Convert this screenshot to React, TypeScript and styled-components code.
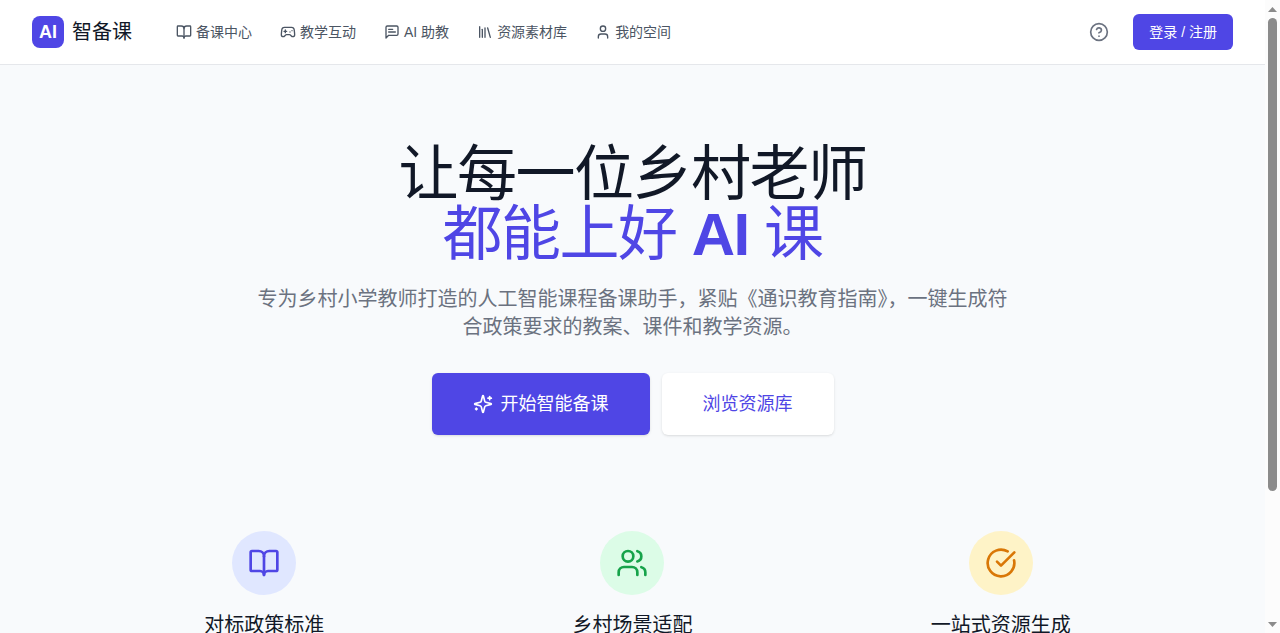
import React, { useCallback, useEffect, useRef, useState } from "react";
import styled, { createGlobalStyle } from "styled-components";
import {
  BookOpen,
  CircleCheckBig,
  CircleQuestionMark,
  Gamepad2,
  Library,
  User,
  Users,
} from "lucide-react";

const GlobalStyle = createGlobalStyle`
  *, *::before, *::after { box-sizing: border-box; }
  body {
    margin: 0;
    background: #f9fafb;
    color: #111827;
    font-family: "Liberation Sans", "Noto Sans CJK SC", sans-serif;
    font-size: 16px;
    line-height: 24px;
  }
  h1, h3, p { margin: 0; }
  a { color: inherit; text-decoration: none; }
`;

const Shell = styled.div`
  display: flex;
  height: 100vh;
`;

const Page = styled.div`
  flex: 1;
  min-width: 0;
  overflow-y: auto;
  scrollbar-width: none;
  background: #f8fafc;
`;

const ScrollRail = styled.div`
  display: flex;
  flex-direction: column;
  width: 15px;
  background: #fcfcfc;
`;

const RailButton = styled.button`
  display: flex;
  align-items: center;
  justify-content: center;
  height: 18px;
  padding: 0;
  border: 0;
  background: none;
  color: #8b8b8b;
`;

const RailTrack = styled.div`
  flex: 1;
  padding: 0 3px;
`;

const RailThumb = styled.div`
  border-radius: 5px;
  background: #8b8b8b;
`;

const Header = styled.header`
  background: #ffffff;
  border-bottom: 1px solid #e5e7eb;
`;

const HeaderInner = styled.div`
  display: flex;
  align-items: center;
  max-width: 1280px;
  height: 64px;
  margin: 0 auto;
  padding: 0 32px;
`;

const Brand = styled.a`
  display: flex;
  align-items: center;
  gap: 8px;
  font-size: 20px;
  line-height: 28px;
`;

const Logo = styled.span`
  display: flex;
  align-items: center;
  justify-content: center;
  width: 32px;
  height: 32px;
  border-radius: 8px;
  background: #4f46e5;
  color: #ffffff;
  font-size: 18px;
  font-weight: 700;
`;

const Nav = styled.nav`
  display: flex;
  gap: 28px;
  margin-left: 44px;
`;

const NavLink = styled.a`
  display: flex;
  align-items: center;
  gap: 4px;
  color: #4b5563;
  font-size: 14px;
  line-height: 20px;
  white-space: nowrap;
`;

const Actions = styled.div`
  display: flex;
  align-items: center;
  gap: 24px;
  margin-left: auto;
`;

const IconButton = styled.button`
  display: flex;
  padding: 0;
  border: 0;
  background: none;
  color: #6b7280;
  cursor: pointer;
`;

const LoginButton = styled.button`
  padding: 8px 16px;
  border: 0;
  border-radius: 6px;
  background: #4f46e5;
  color: #ffffff;
  font: inherit;
  font-size: 14px;
  line-height: 20px;
  white-space: nowrap;
  cursor: pointer;
`;

const Hero = styled.section`
  padding: 80px 32px;
  text-align: center;
`;

const Title = styled.h1`
  font-size: 60px;
  font-weight: 400;
  line-height: 60px;
  letter-spacing: -0.025em;
`;

const Accent = styled.span`
  display: block;
  color: #4f46e5;
`;

const Lead = styled.p`
  max-width: 768px;
  margin: 20px auto 0;
  color: #6b7280;
  font-size: 20px;
  line-height: 28px;
`;

const ButtonRow = styled.div`
  display: flex;
  justify-content: center;
  gap: 12px;
  margin-top: 32px;
`;

const HeroButton = styled.button<{ $primary?: boolean }>`
  display: flex;
  align-items: center;
  gap: 8px;
  padding: 17px 41px;
  border: 0;
  border-radius: 6px;
  background: ${(p) => (p.$primary ? "#4f46e5" : "#ffffff")};
  color: ${(p) => (p.$primary ? "#ffffff" : "#4f46e5")};
  box-shadow: 0 1px 3px rgba(0, 0, 0, 0.1), 0 1px 2px -1px rgba(0, 0, 0, 0.1);
  font: inherit;
  font-size: 18px;
  line-height: 28px;
  cursor: pointer;
`;

const Features = styled.section`
  display: grid;
  grid-template-columns: repeat(3, 1fr);
  gap: 32px;
  max-width: 1280px;
  margin: 0 auto;
  padding: 16px 96px 160px;
`;

const Feature = styled.article`
  display: flex;
  flex-direction: column;
  align-items: center;
  gap: 16px;
`;

const FeatureIcon = styled.div<{ $bg: string; $fg: string }>`
  display: flex;
  align-items: center;
  justify-content: center;
  width: 64px;
  height: 64px;
  border-radius: 50%;
  background: ${(p) => p.$bg};
  color: ${(p) => p.$fg};
`;

const FeatureTitle = styled.h3`
  font-size: 20px;
  font-weight: 400;
  line-height: 28px;
`;

function LineIcon({ size, children }: { size: number; children: React.ReactNode }) {
  return (
    <svg
      width={size}
      height={size}
      viewBox="0 0 24 24"
      fill="none"
      stroke="currentColor"
      strokeWidth="2"
      strokeLinecap="round"
      strokeLinejoin="round"
      aria-hidden="true"
    >
      {children}
    </svg>
  );
}

function ChatIcon({ size }: { size: number }) {
  return (
    <LineIcon size={size}>
      <path d="M21 15a2 2 0 0 1-2 2H7l-4 4V5a2 2 0 0 1 2-2h14a2 2 0 0 1 2 2z" />
      <path d="M13 8H7" />
      <path d="M17 12H7" />
    </LineIcon>
  );
}

function SparklesIcon({ size }: { size: number }) {
  return (
    <LineIcon size={size}>
      <path d="M9.937 15.5A2 2 0 0 0 8.5 14.063l-6.135-1.582a.5.5 0 0 1 0-.962L8.5 9.936A2 2 0 0 0 9.937 8.5l1.582-6.135a.5.5 0 0 1 .963 0L14.063 8.5A2 2 0 0 0 15.5 9.937l6.135 1.581a.5.5 0 0 1 0 .964L15.5 14.063a2 2 0 0 0-1.437 1.437l-1.582 6.135a.5.5 0 0 1-.963 0z" />
      <path d="M20 3v4" />
      <path d="M22 5h-4" />
      <path d="M4 17v2" />
      <path d="M5 18H3" />
    </LineIcon>
  );
}

const navItems = [
  { label: "备课中心", Icon: BookOpen },
  { label: "教学互动", Icon: Gamepad2 },
  { label: "AI 助教", Icon: ChatIcon },
  { label: "资源素材库", Icon: Library },
  { label: "我的空间", Icon: User },
];

const features = [
  { title: "对标政策标准", Icon: BookOpen, bg: "#e0e7ff", fg: "#4f46e5" },
  { title: "乡村场景适配", Icon: Users, bg: "#dcfce7", fg: "#16a34a" },
  { title: "一站式资源生成", Icon: CircleCheckBig, bg: "#fef3c7", fg: "#d97706" },
];

export default function App() {
  const pageRef = useRef<HTMLDivElement>(null);
  const [thumb, setThumb] = useState({ size: 1, offset: 0, track: 0 });
  const trackRef = useRef<HTMLDivElement>(null);

  const measure = useCallback(() => {
    const page = pageRef.current;
    const track = trackRef.current;
    if (!page || !track) return;
    setThumb({
      size: page.clientHeight / page.scrollHeight,
      offset: page.scrollTop / page.scrollHeight,
      track: track.clientHeight,
    });
  }, []);

  useEffect(() => {
    measure();
    window.addEventListener("resize", measure);
    return () => window.removeEventListener("resize", measure);
  }, [measure]);

  const scrollBy = (top: number) => pageRef.current?.scrollBy({ top });

  return (
    <Shell>
      <GlobalStyle />
      <Page ref={pageRef} onScroll={measure}>
        <Header>
          <HeaderInner>
            <Brand href="#">
              <Logo>AI</Logo>
              智备课
            </Brand>
            <Nav>
              {navItems.map(({ label, Icon }) => (
                <NavLink key={label} href="#">
                  <Icon size={16} />
                  {label}
                </NavLink>
              ))}
            </Nav>
            <Actions>
              <IconButton type="button" aria-label="帮助">
                <CircleQuestionMark size={20} />
              </IconButton>
              <LoginButton type="button">登录 / 注册</LoginButton>
            </Actions>
          </HeaderInner>
        </Header>
        <main>
          <Hero>
            <Title>
              让每一位乡村老师
              <Accent>
                都能上好 <b>AI</b> 课
              </Accent>
            </Title>
            <Lead>
              专为乡村小学教师打造的人工智能课程备课助手，紧贴《通识教育指南》，一键生成符合政策要求的教案、课件和教学资源。
            </Lead>
            <ButtonRow>
              <HeroButton type="button" $primary>
                <SparklesIcon size={20} />
                开始智能备课
              </HeroButton>
              <HeroButton type="button">浏览资源库</HeroButton>
            </ButtonRow>
          </Hero>
          <Features>
            {features.map(({ title, Icon, bg, fg }) => (
              <Feature key={title}>
                <FeatureIcon $bg={bg} $fg={fg}>
                  <Icon size={32} />
                </FeatureIcon>
                <FeatureTitle>{title}</FeatureTitle>
              </Feature>
            ))}
          </Features>
        </main>
      </Page>
      <ScrollRail>
        <RailButton type="button" tabIndex={-1} aria-label="向上滚动" onClick={() => scrollBy(-40)}>
          <svg width="9" height="5" viewBox="0 0 9 5" fill="currentColor" aria-hidden="true">
            <path d="M0 5 4.5 0 9 5z" />
          </svg>
        </RailButton>
        <RailTrack ref={trackRef}>
          <RailThumb
            style={{
              height: Math.round(thumb.size * thumb.track),
              marginTop: Math.round(thumb.offset * thumb.track),
            }}
          />
        </RailTrack>
        <RailButton type="button" tabIndex={-1} aria-label="向下滚动" onClick={() => scrollBy(40)}>
          <svg width="9" height="5" viewBox="0 0 9 5" fill="currentColor" aria-hidden="true">
            <path d="M0 0h9L4.5 5z" />
          </svg>
        </RailButton>
      </ScrollRail>
    </Shell>
  );
}
